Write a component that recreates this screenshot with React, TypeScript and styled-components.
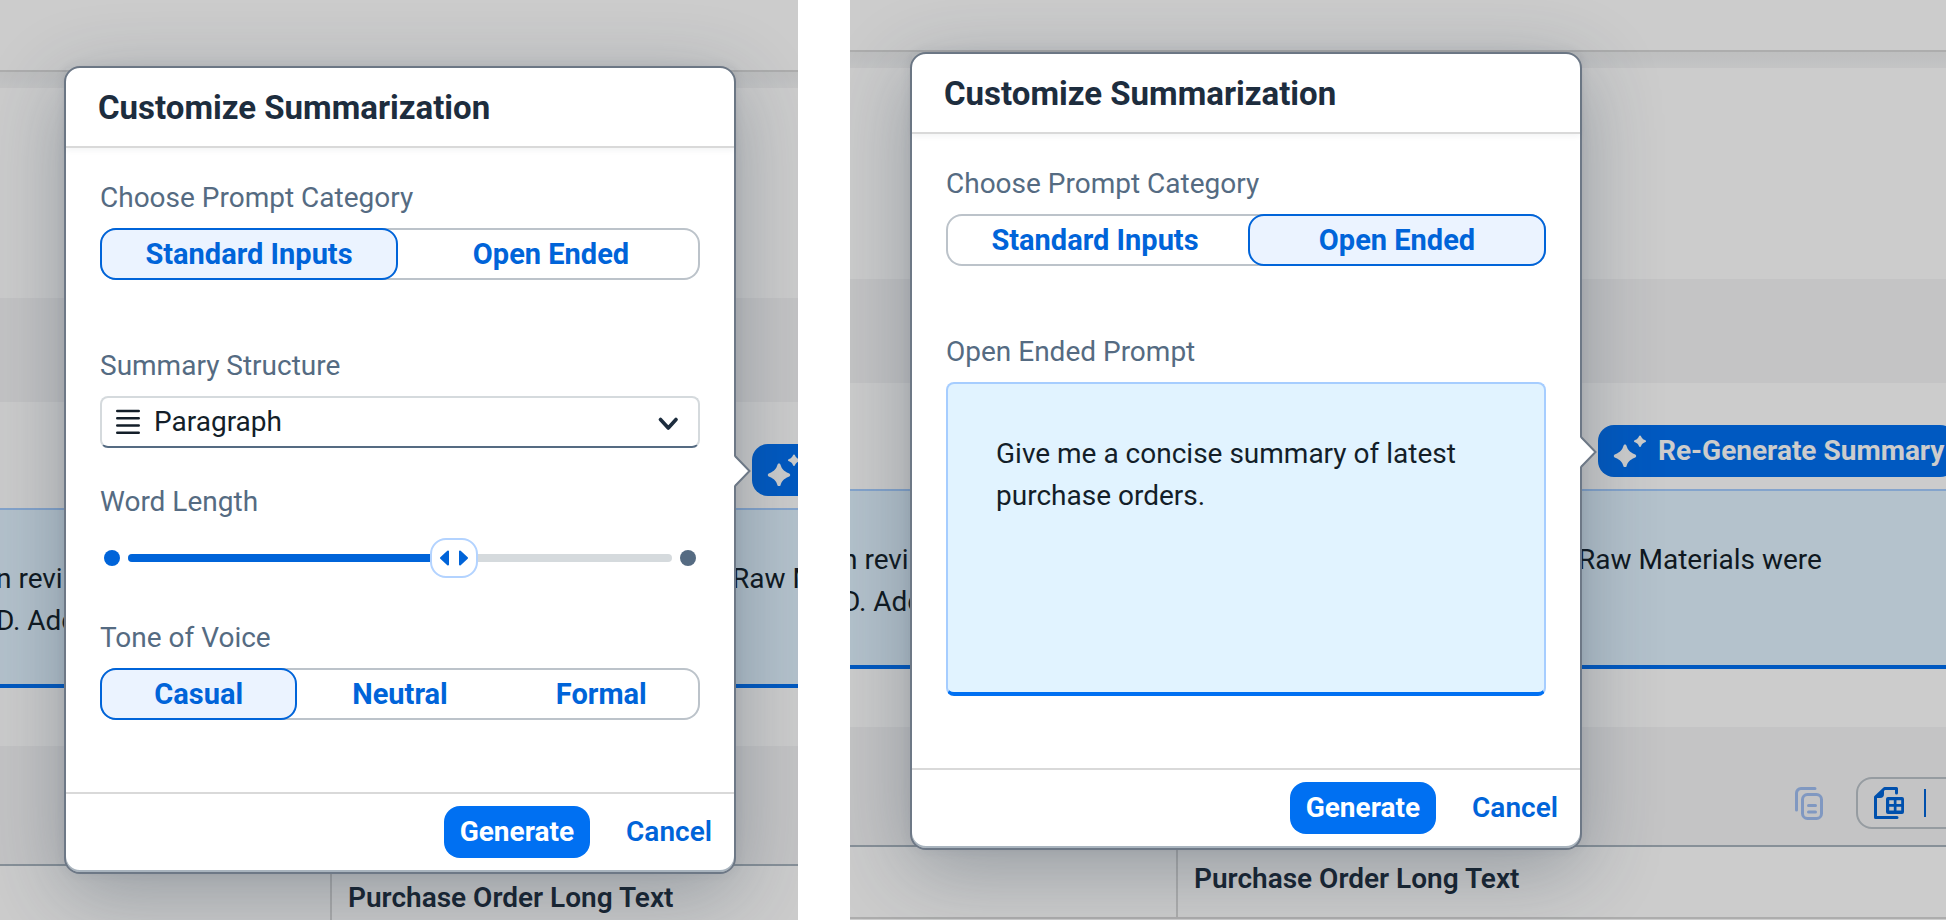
import React, { useId, useState } from 'react';
import styled, { createGlobalStyle } from 'styled-components';

const GlobalStyle = createGlobalStyle`
  *, *::before, *::after { box-sizing: border-box; }
  body {
    margin: 0;
    background: #fff;
    color: #131e29;
    font: 400 28px/36px Roboto, "Liberation Sans", sans-serif;
  }
  button, select, textarea { font: inherit; color: inherit; margin: 0; }
`;

/* ---------- page ---------- */

const Page = styled.main`
  display: grid;
  grid-template-columns: 798fr 1096fr;
  gap: 52px;
  height: 100vh;
`;

const Panel = styled.section`
  display: grid;
  grid-template: minmax(0, 1fr) / minmax(0, 1fr);
  overflow: hidden;
  min-width: 0;

  > * { grid-area: 1 / 1; }
`;

/* ---------- application behind the dialog ---------- */

const Scene = styled.div<{ $shift: number }>`
  margin-left: ${p => -p.$shift}px;
  overflow: hidden;
  background: #fff;
`;

const ShellBar = styled.header<{ $height: number }>`
  height: ${p => p.$height}px;
  border-bottom: 2px solid #d9d9d9;
`;

const ShellShade = styled.div`
  height: 16px;
  background: linear-gradient(#eeeff0, #f5f6f7);
`;

const Hero = styled.div<{ $height: number }>`
  height: ${p => p.$height}px;
`;

const Band = styled.div`
  height: 104px;
  background: #f5f6f7;
`;

const ActionBar = styled.div`
  display: flex;
  padding: 42px 0 12px 752px;
`;

const RegenerateButton = styled.button`
  display: flex;
  align-items: center;
  gap: 12px;
  flex: none;
  height: 52px;
  padding: 0 12px;
  border: 0;
  border-radius: 16px;
  background: #0070f2;
  color: #fff;
  font-weight: 700;
  white-space: nowrap;
`;

const SummaryBox = styled.div`
  display: grid;
  grid-template-columns: 736px auto;
  align-content: start;
  justify-content: start;
  height: 180px;
  margin-left: -4px;
  padding-top: 48px;
  border-top: 2px solid #a6cdff;
  border-bottom: 4px solid #0070f2;
  background: #e1f3ff;
  line-height: 42px;
  white-space: nowrap;
`;

const SummaryText = styled.p`
  margin: 0;
`;

const Toolbar = styled.div`
  display: flex;
  align-items: center;
  gap: 32px;
  margin-top: 58px;
  padding: 50px 0 16px 946px;
  border-bottom: 2px solid #a9b4be;
  background: #f5f6f7;
`;

const IconButton = styled.button`
  display: flex;
  flex: none;
  padding: 0;
  border: 0;
  background: none;
`;

const ExportButton = styled.button`
  display: flex;
  align-items: center;
  gap: 16px;
  flex: none;
  width: 120px;
  height: 52px;
  padding: 0 14px;
  border: 2px solid #bcc3ca;
  border-radius: 16px;
  background: none;
`;

const ExportDivider = styled.span`
  width: 2px;
  height: 28px;
  background: #0064d9;
`;

const Table = styled.table`
  width: 100%;
  border-collapse: separate;
  border-spacing: 0;
  table-layout: fixed;
`;

const HeadCell = styled.th<{ $first?: boolean }>`
  width: ${p => (p.$first ? '332px' : 'auto')};
  height: 72px;
  padding: 14px 16px 0;
  border-bottom: 2px solid #d9d9d9;
  border-right: ${p => (p.$first ? '2px solid #d9d9d9' : '0')};
  color: #1d2d3e;
  font-weight: 600;
  text-align: left;
  vertical-align: top;
  white-space: nowrap;
`;

/* ---------- dialog ---------- */

const Backdrop = styled.div<{ $top: number; $left: number }>`
  padding: ${p => p.$top}px 0 0 ${p => p.$left}px;
  background: rgba(0, 0, 0, 0.2);
  z-index: 1;
`;

const DialogBox = styled.form`
  position: relative;
  width: 672px;
  border: 2px solid #6d7886;
  border-radius: 16px;
  background: #fff;
  box-shadow: inset 0 -2px 0 #a9b4be, 0 20px 80px rgba(34, 53, 72, 0.32), 0 0 12px rgba(34, 53, 72, 0.08);
`;

const DialogHeader = styled.header`
  padding: 22px 32px 20px;
  border-bottom: 2px solid #d9d9d9;
  box-shadow: 0 2px 6px rgba(34, 53, 72, 0.06);
`;

const DialogTitle = styled.h2`
  margin: 0;
  color: #1d2d3e;
  font-size: 33px;
  line-height: 36px;
  font-weight: 700;
`;

const DialogBody = styled.div`
  display: flex;
  flex-direction: column;
  gap: 36px;
  padding: 32px 34px 72px;
`;

const DialogFooter = styled.footer`
  display: flex;
  justify-content: flex-end;
  gap: 24px;
  padding: 12px 10px 14px;
  border-top: 2px solid #d9d9d9;
`;

const FooterButton = styled.button<{ $primary?: boolean }>`
  height: 52px;
  padding: 0 ${p => (p.$primary ? 16 : 12)}px;
  border: 0;
  border-radius: 16px;
  background: ${p => (p.$primary ? '#0070f2' : 'none')};
  color: ${p => (p.$primary ? '#fff' : '#0064d9')};
  font-weight: ${p => (p.$primary ? 700 : 600)};
`;

const Pointer = styled.svg`
  position: absolute;
  top: 50%;
  left: 100%;
  width: 18px;
  height: 32px;
  margin-top: -15px;
`;

const Field = styled.div<{ $spaced?: boolean }>`
  display: flex;
  flex-direction: column;
  gap: 12px;
  margin-bottom: ${p => (p.$spaced ? 32 : 0)}px;
`;

const Label = styled.label`
  color: #556b82;
`;

const Segments = styled.div`
  display: flex;
  gap: 4px;
  border-radius: 16px;
  box-shadow: inset 0 0 0 2px #bcc3ca;
`;

const Segment = styled.button<{ $on: boolean }>`
  flex: 1 1 0;
  height: 52px;
  padding: 0;
  border: 2px solid ${p => (p.$on ? '#0064d9' : 'transparent')};
  border-radius: 16px;
  background: ${p => (p.$on ? '#ebf3ff' : 'transparent')};
  color: #0064d9;
  font-size: 29px;
  line-height: 36px;
  font-weight: 700;
`;

const SelectWrap = styled.div`
  display: grid;
  grid-template-columns: 56px 1fr 64px;
  align-items: center;
  justify-items: center;

  > svg { grid-area: 1 / 1; pointer-events: none; z-index: 1; }
  > svg:last-child { grid-area: 1 / 3; }
`;

const Select = styled.select`
  grid-area: 1 / 1 / 2 / 4;
  width: 100%;
  height: 52px;
  padding: 0 64px 0 52px;
  border: 2px solid #d5dadd;
  border-bottom-color: #556b82;
  border-radius: 8px;
  appearance: none;
  background: #fff;
`;

const SliderRow = styled.div`
  display: flex;
  align-items: center;
  gap: 8px;
  height: 52px;
  padding: 0 4px;
`;

const Dot = styled.span<{ $color: string }>`
  width: 16px;
  height: 16px;
  border-radius: 50%;
  background: ${p => p.$color};
`;

const Track = styled.div`
  position: relative;
  flex: 1;
  height: 8px;
  border-radius: 4px;
  background: #d5dadd;
`;

const Fill = styled.div`
  height: 8px;
  border-radius: 4px;
  background: #0064d9;
`;

const Thumb = styled.span`
  position: absolute;
  top: -16px;
  display: flex;
  width: 48px;
  height: 40px;
  margin-left: -24px;
  border: 2px solid #b3d3ff;
  border-radius: 16px;
  background: #fff;
`;

const Range = styled.input`
  position: absolute;
  inset: -16px 0;
  width: 100%;
  height: 40px;
  margin: 0;
  opacity: 0;
`;

const PromptArea = styled.textarea`
  display: block;
  height: 314px;
  padding: 49px 48px;
  border: 2px solid #a6cdff;
  border-bottom: 4px solid #0070f2;
  border-radius: 8px;
  background: #e1f3ff;
  line-height: 42px;
  resize: none;
`;

/* ---------- icons ---------- */

const SparkleIcon = () => (
  <svg width="36" height="32" viewBox="0 0 36 32" fill="#fff" aria-hidden="true">
    <path d="M15 9.5c.8 0 1.200.5 1.500 1.300 1.500 4.400 3 6.300 8.200 8.500.9.400 1.500.9 1.500 1.700s-.6 1.300-1.500 1.700c-5.200 2.200-6.700 4.100-8.200 8.500-.3.800-.7 1.300-1.500 1.300s-1.200-.5-1.500-1.300c-1.500-4.400-3-6.300-8.200-8.500-.9-.4-1.500-.9-1.500-1.700s.6-1.300 1.500-1.700c5.200-2.200 6.700-4.100 8.200-8.500.3-.8.700-1.300 1.500-1.300z" />
    <path d="M30 .4c.5 0 .8.3 1 .8.8 2 1.800 3 4 3.900.6.300 1 .6 1 1.100s-.4.900-1 1.100c-2.200.9-3.200 1.900-4 3.900-.2.500-.5.800-1 .8s-.8-.3-1-.8c-.8-2-1.800-3-4-3.900-.6-.2-1-.6-1-1.100s.4-.8 1-1.100c2.200-.9 3.200-1.900 4-3.900.2-.5.500-.8 1-.8z" />
  </svg>
);

const CopyIcon = () => (
  <svg width="32" height="36" viewBox="0 0 32 36" fill="none" stroke="#a0bef2" strokeWidth="3" strokeLinecap="round" aria-hidden="true">
    <path d="M4.500 25V8A4.500 4.500 0 0 1 9 3.500H23" />
    <rect x="10.500" y="9.500" width="19" height="24" rx="5" />
    <path d="M16.500 20.500h7M16.500 27h7" />
  </svg>
);

const SheetIcon = () => (
  <svg width="36" height="36" viewBox="0 0 36 36" fill="none" aria-hidden="true">
    <path d="M3.500 12v20.500H25M3.500 12l9-8.500H24.500V8" stroke="#0064d9" strokeWidth="3" strokeLinecap="round" strokeLinejoin="round" />
    <path d="M2 13 12 3v6a4 4 0 0 1-4 4z" fill="#0064d9" />
    <path fillRule="evenodd" fill="#0064d9" d="M16 12h14a2 2 0 0 1 2 2v13a2 2 0 0 1-2 2H16a2 2 0 0 1-2-2V14a2 2 0 0 1 2-2zm1.200 3.200V19h4.600v-3.800zm7.300 0V19h4.700v-3.800zm-7.300 6.600v3.800h4.600v-3.800zm7.300 0v3.800h4.700v-3.800z" />
  </svg>
);

const LinesIcon = () => (
  <svg width="26" height="28" viewBox="0 0 26 28" stroke="#131e29" strokeWidth="2.600" strokeLinecap="round" aria-hidden="true">
    <path d="M2.300 3h21.400M2.300 10.200h21.400M2.300 17.500h21.400M2.300 24.700h21.400" />
  </svg>
);

const ChevronIcon = () => (
  <svg width="24" height="16" viewBox="0 0 24 16" fill="none" stroke="#1d2d3e" strokeWidth="3.600" strokeLinecap="round" strokeLinejoin="round" aria-hidden="true">
    <path d="m4.500 5.500 7.800 8.500 7.700-8.500" />
  </svg>
);

const ThumbIcon = () => (
  <svg width="44" height="36" viewBox="0 0 44 36" fill="#0064d9" stroke="#0064d9" strokeWidth="2" strokeLinejoin="round" aria-hidden="true">
    <path d="M9 18l7-6.500v13zM35 18l-7-6.500v13z" />
  </svg>
);

/* ---------- parts ---------- */

function SegmentedField({ label, options, value, spaced }: { label: string; options: string[]; value: string; spaced?: boolean }) {
  const id = useId();
  const [selected, setSelected] = useState(value);
  return (
    <Field $spaced={spaced}>
      <Label as="span" id={id}>{label}</Label>
      <Segments role="group" aria-labelledby={id}>
        {options.map(o => (
          <Segment key={o} type="button" $on={o === selected} aria-pressed={o === selected} onClick={() => setSelected(o)}>
            {o}
          </Segment>
        ))}
      </Segments>
    </Field>
  );
}

function SliderField() {
  const id = useId();
  const [value, setValue] = useState(60);
  return (
    <Field>
      <Label htmlFor={id}>Word Length</Label>
      <SliderRow>
        <Dot $color="#0064d9" />
        <Track>
          <Fill style={{ width: `${value}%` }} />
          <Thumb style={{ left: `${value}%` }}><ThumbIcon /></Thumb>
          <Range id={id} type="range" value={value} onChange={e => setValue(Number(e.target.value))} />
        </Track>
        <Dot $color="#556b82" />
      </SliderRow>
    </Field>
  );
}

function StructureField() {
  const id = useId();
  return (
    <Field>
      <Label htmlFor={id}>Summary Structure</Label>
      <SelectWrap>
        <LinesIcon />
        <Select id={id} defaultValue="Paragraph">
          <option>Paragraph</option>
        </Select>
        <ChevronIcon />
      </SelectWrap>
    </Field>
  );
}

function PromptField() {
  const id = useId();
  return (
    <Field>
      <Label htmlFor={id}>Open Ended Prompt</Label>
      <PromptArea id={id} defaultValue="Give me a concise summary of latest purchase orders." />
    </Field>
  );
}

function Dialog({ category, children }: { category: string; children: React.ReactNode }) {
  return (
    <DialogBox role="dialog" aria-label="Customize Summarization" onSubmit={e => e.preventDefault()}>
      <DialogHeader>
        <DialogTitle>Customize Summarization</DialogTitle>
      </DialogHeader>
      <DialogBody>
        <SegmentedField label="Choose Prompt Category" options={['Standard Inputs', 'Open Ended']} value={category} spaced />
        {children}
      </DialogBody>
      <DialogFooter>
        <FooterButton $primary type="submit">Generate</FooterButton>
        <FooterButton type="button">Cancel</FooterButton>
      </DialogFooter>
      <Pointer viewBox="0 0 18 32" aria-hidden="true">
        <path d="M0 1 15 16 0 31z" fill="#fff" />
        <path d="M1 1 15.500 16 1 31" fill="none" stroke="#6d7886" strokeWidth="2" />
      </Pointer>
    </DialogBox>
  );
}

function AppScene({ shift, shell, hero }: { shift: number; shell: number; hero: number }) {
  return (
    <Scene $shift={shift}>
      <ShellBar $height={shell} />
      <ShellShade />
      <Hero $height={hero} />
      <Band />
      <ActionBar>
        <RegenerateButton type="button"><SparkleIcon />Re-Generate Summary</RegenerateButton>
      </ActionBar>
      <SummaryBox>
        <SummaryText>n revi</SummaryText>
        <SummaryText>Raw Materials were</SummaryText>
        <SummaryText>D. Add</SummaryText>
      </SummaryBox>
      <Toolbar>
        <IconButton type="button" aria-label="Copy" disabled><CopyIcon /></IconButton>
        <ExportButton type="button" aria-label="Export"><SheetIcon /><ExportDivider /></ExportButton>
      </Toolbar>
      <Table>
        <thead>
          <tr>
            <HeadCell $first />
            <HeadCell>Purchase Order Long Text</HeadCell>
          </tr>
        </thead>
      </Table>
    </Scene>
  );
}

export default function App() {
  return (
    <>
      <GlobalStyle />
      <Page>
        <Panel>
          <AppScene shift={0} shell={72} hero={210} />
          <Backdrop $top={66} $left={64}>
            <Dialog category="Standard Inputs">
              <StructureField />
              <SliderField />
              <SegmentedField label="Tone of Voice" options={['Casual', 'Neutral', 'Formal']} value="Casual" />
            </Dialog>
          </Backdrop>
        </Panel>
        <Panel>
          <AppScene shift={4} shell={52} hero={211} />
          <Backdrop $top={52} $left={60}>
            <Dialog category="Open Ended">
              <PromptField />
            </Dialog>
          </Backdrop>
        </Panel>
      </Page>
    </>
  );
}
